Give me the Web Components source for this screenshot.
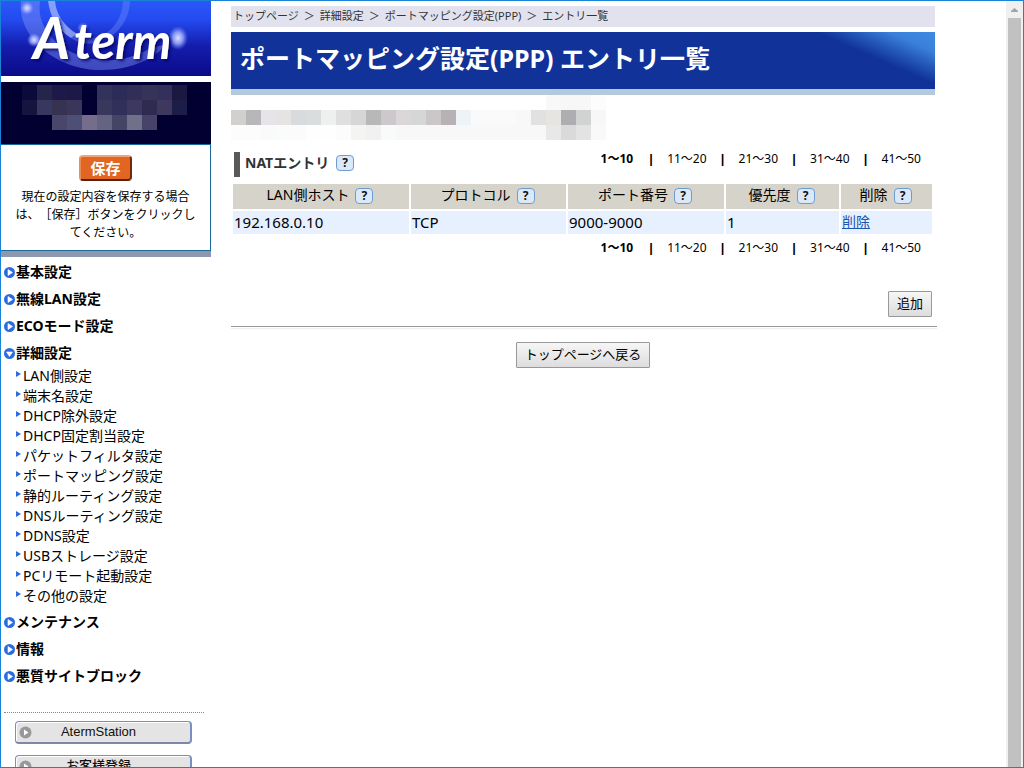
<!DOCTYPE html>
<html lang="ja">
<head>
<meta charset="utf-8">
<title>ポートマッピング設定(PPP) エントリ一覧</title>
<style>
html, body { margin: 0; height: 100%; }
body { font-family: "Noto Sans", "Noto Sans CJK JP", sans-serif; font-size: 14px; color: #000; background: #fff; overflow: hidden; text-spacing-trim: space-all; }
</style>
</head>
<body>
<app-frame>
  <side-bar slot="side">
    <side-group label="基本設定"></side-group>
    <side-group label="無線LAN設定"></side-group>
    <side-group label="ECOモード設定"></side-group>
    <side-group label="詳細設定" open>
      <side-link>LAN側設定</side-link>
      <side-link>端末名設定</side-link>
      <side-link>DHCP除外設定</side-link>
      <side-link>DHCP固定割当設定</side-link>
      <side-link>パケットフィルタ設定</side-link>
      <side-link>ポートマッピング設定</side-link>
      <side-link>静的ルーティング設定</side-link>
      <side-link>DNSルーティング設定</side-link>
      <side-link>DDNS設定</side-link>
      <side-link>USBストレージ設定</side-link>
      <side-link>PCリモート起動設定</side-link>
      <side-link>その他の設定</side-link>
    </side-group>
    <side-group label="メンテナンス"></side-group>
    <side-group label="情報"></side-group>
    <side-group label="悪質サイトブロック"></side-group>
    <banner-link slot="banners">AtermStation</banner-link>
    <banner-link slot="banners">お客様登録</banner-link>
  </side-bar>
  <entry-page slot="main"></entry-page>
</app-frame>

<script>
class Base extends HTMLElement {
  connectedCallback() {
    if (this.shadowRoot) return;
    this.attachShadow({ mode: 'open' }).innerHTML =
      '<style>:host{display:block;box-sizing:border-box}*{box-sizing:border-box}a{color:inherit;text-decoration:none}' + this.css() + '</style>' + this.html();
  }
  css() { return ''; }
  html() { return '<slot></slot>'; }
}

customElements.define('app-frame', class extends Base {
  css() { return `
    :host{display:flex;height:100vh;border:1px solid #1883d7;overflow:hidden;background:#fff}
    .side{flex:none;width:210px}
    .main{flex:1;min-width:0;padding:5px 71px 0 20px}`; }
  html() { return `<div class="side"><slot name="side"></slot></div><main class="main"><slot name="main"></slot></main><scroll-track></scroll-track>`; }
});

customElements.define('scroll-track', class extends Base {
  css() { return `
    :host{flex:none;display:flex;flex-direction:column;align-items:center;width:17px;background:#f0f0f0}
    svg{display:block;width:17px;height:17px;flex:none}
    div{flex:1;width:13px;background:#c1c1c1}`; }
  html() { return `<svg viewBox="0 0 17 17"><path d="M5 11V10L8.500 7L12 10V11Z" fill="#a3a3a3"/></svg><div></div>`; }
});

/* Grid of 15px tiles; each row is a list of colours, "-" leaves the tile empty. */
customElements.define('tile-grid', class extends Base {
  css() { return `svg{display:block}`; }
  html() {
    const rows = this.getAttribute('rows').split('|').map(r => r.trim().split(/\s+/));
    const w = Math.max(...rows.map(r => r.length)) * 15, h = rows.length * 15;
    let s = '';
    rows.forEach((r, y) => r.forEach((c, x) => { if (c !== '-') s += `<rect x="${x * 15}" y="${y * 15}" width="15" height="15" fill="#${c}"/>`; }));
    return `<svg width="${w}" height="${h}" shape-rendering="crispEdges" aria-hidden="true">${s}</svg>`;
  }
});

customElements.define('brand-logo', class extends Base {
  css() { return `svg{display:block;width:100%;height:75px}`; }
  html() { return `
  <svg viewBox="0 0 210 75" role="img" aria-label="Aterm">
    <defs>
      <linearGradient id="sky" x1="0" y1="0" x2="0" y2="1"><stop offset="0" stop-color="#2a58f8"/><stop offset=".25" stop-color="#244af0"/><stop offset=".6" stop-color="#141dac"/><stop offset="1" stop-color="#0b0b88"/></linearGradient>
      <radialGradient id="glow"><stop offset="0" stop-color="#dfe2ff"/><stop offset=".5" stop-color="#a5b2ff" stop-opacity=".8"/><stop offset="1" stop-color="#6f86ff" stop-opacity="0"/></radialGradient>
      <filter id="sh" x="-10%" y="-10%" width="130%" height="140%"><feDropShadow dx="2" dy="2" stdDeviation="1.500" flood-color="#06065c" flood-opacity=".8"/></filter>
    </defs>
    <rect width="210" height="75" fill="url(#sky)"/>
    <path d="M20 0C16 38 58 70 101 69C132 69 155 56 166 43L150 47C136 55 120 60 103 59C66 58 34 32 39 0Z" fill="#7f93f5" opacity=".45"/>
    <path d="M47 0C49 16 57 29 70 37L76 33C63 25 55 13 54 0Z" fill="#a4b8ff" opacity=".75"/>
    <path d="M70 37C93 53 128 33 129 0H122C121 29 94 45 76 33Z" fill="#6f8cff" opacity=".4"/>
    <circle cx="26" cy="7" r="7" fill="url(#glow)"/><circle cx="33" cy="39" r="7" fill="url(#glow)"/><circle cx="82" cy="27" r="6" fill="url(#glow)" opacity=".6"/>
    <ellipse cx="177" cy="37" rx="10" ry="12" fill="url(#glow)"/>
    <g fill="#fff" filter="url(#sh)" font-family="Lato, sans-serif" font-weight="bold" font-style="italic">
      <text x="32" y="58" font-size="57">A</text><text x="73" y="58" font-size="49">term</text>
    </g>
  </svg>`; }
});

customElements.define('save-panel', class extends Base {
  css() { return `
    :host{border:1px solid #1a6b9b;border-left:0;height:107px;padding:10px 10px 0;text-align:center}
    button{display:block;margin:0 auto 7px;width:53px;height:26px;padding:0;border:2px solid;border-color:#f0a47c #6f2c0c #5c2207 #e88d5c;border-radius:4px;background:#e26522;color:#fff;font:bold 15px/20px "Noto Sans CJK JP",sans-serif}
    p{margin:0;font-size:12px;line-height:18px}`; }
  html() { return `<button>保存</button><p>現在の設定内容を保存する場合は、［保存］ボタンをクリックしてください。</p>`; }
});

customElements.define('side-bar', class extends Base {
  css() { return `
    .id{margin-top:6px;height:62px;padding:3px 21px;background:#010030}
    .bar{height:6px;background:#8e97b0}
    nav{padding:2px 0 22px 3px}
    .banners{display:flex;flex-direction:column;gap:11px;margin:0 7px 0 3px;padding:8px 12px 0 11px;border-top:1px dotted #888}`; }
  html() { return `
    <brand-logo></brand-logo>
    <div class="id"><tile-grid rows="0b0a3a 25244a 1d1a49 1c1948 - 33325b 2d2b57 312e58 353458 33305d 1d1842|15143f 363860 37324f 39365a - 39375c 31305b 3c3860 2e2a51 3e385e 1c1d48|- - 48466a 4d4f77 766d8c 646382 444564 70708a 47426a"></tile-grid></div>
    <save-panel></save-panel><div class="bar"></div>
    <nav><slot></slot></nav>
    <div class="banners"><slot name="banners"></slot></div>`; }
});

customElements.define('side-group', class extends Base {
  css() { return `
    a{display:flex;align-items:center;gap:1px;height:27px;padding-bottom:1px;font-weight:bold;line-height:20px}
    svg{flex:none;width:11px;height:11px}
    :host([open]) svg{transform:rotate(90deg)}
    :host([open]){padding-bottom:2px}
    .sub{padding-left:12px}`; }
  html() { return `<a href="#"><svg viewBox="0 0 11 11" aria-hidden="true"><circle cx="5.500" cy="5.500" r="5.500" fill="#2a6be0"/><path d="M4 2.500L8.500 5.500L4 8.500Z" fill="#fff" stroke="#fff" stroke-width=".6"/></svg><span>${this.getAttribute('label')}</span></a><div class="sub"><slot></slot></div>`; }
});

customElements.define('side-link', class extends Base {
  css() { return `
    a{display:flex;align-items:center;gap:2px;height:20px;line-height:18px;padding-bottom:2px;white-space:nowrap}
    svg{flex:none;width:5px;height:6px;margin-bottom:4px}`; }
  html() { return `<a href="#"><svg viewBox="0 0 5 6" aria-hidden="true"><path d="M0 0L5 3L0 6Z" fill="#2a6be0"/></svg><span><slot></slot></span></a>`; }
});

customElements.define('banner-link', class extends Base {
  css() { return `
    a{display:flex;align-items:center;height:23px;padding:0 25px 0 3px;border:1px solid #7890c0;border-right-width:2px;border-bottom:2px solid #7c88a4;border-radius:4px;background:#e4e4e4;box-shadow:inset 1px 1px #fff;color:#111;font:500 13px/20px "Liberation Sans","Noto Sans CJK JP",sans-serif}
    svg{flex:none;width:13px;height:13px}
    span{flex:1;text-align:center}`; }
  html() { return `<a href="#"><svg viewBox="0 0 13 13" aria-hidden="true"><circle cx="6.500" cy="6.500" r="6" fill="#999"/><path d="M5 3.500L9.500 6.500L5 9.500Z" fill="#fff"/></svg><span><slot></slot></span></a>`; }
});

customElements.define('help-badge', class extends Base {
  css() { return `
    :host{display:inline-block;vertical-align:middle}
    button{display:block;width:18px;height:16px;padding:0;border:1px solid #6f9cd0;border-radius:4px;background:#dbe8f7;color:#111;font:bold 12px/14px "Noto Sans",sans-serif}`; }
  html() { return `<button aria-label="ヘルプ">?</button>`; }
});

customElements.define('page-links', class extends Base {
  css() { return `
    :host{display:flex;justify-content:flex-end;align-items:center;font-size:12px;line-height:18px;height:18px;padding-right:14px}
    i{width:32px;text-align:center;font:900 12px/12px "Noto Sans",sans-serif}
    b{margin-right:2px}`; }
  html() { return `<b>1～10</b><i>|</i>` + ['11～20', '21～30', '31～40', '41～50'].map(t => `<a href="#">${t}</a>`).join('<i>|</i>'); }
});

customElements.define('push-button', class extends Base {
  css() { return `
    button{display:block;height:26px;padding:0 8px 2px;border:1px solid #999;border-radius:1px;background:linear-gradient(#f6f6f6,#ddd);color:#000;font:13px/22px "Noto Sans","Noto Sans CJK JP",sans-serif}`; }
  html() { return `<button><slot></slot></button>`; }
});

customElements.define('entry-table', class extends Base {
  css() { return `
    table{width:100%;table-layout:fixed;border-collapse:separate;border-spacing:2px}
    th{height:25px;padding:0 2px 3px 0;background:#d6d3ca;font-weight:normal;line-height:20px}
    td{height:22px;padding:0 1px 2px;background:#e6f0ff;font-size:15px;line-height:20px}
    td a{font-size:14px;color:#1a55b0;text-decoration:underline}
    help-badge{margin-left:6px}
    .host{width:176px}.proto{width:155px}.port{width:156px}.pri{width:113px}.del{width:91px}`; }
  html() {
    const h = [['host', 'LAN側ホスト'], ['proto', 'プロトコル'], ['port', 'ポート番号'], ['pri', '優先度'], ['del', '削除']];
    return `<table><thead><tr>${h.map(([c, t]) => `<th class="${c}">${t}<help-badge></help-badge></th>`).join('')}</tr></thead>
    <tbody><tr><td>192.168.0.10</td><td>TCP</td><td>9000-9000</td><td>1</td><td><a href="#">削除</a></td></tr></tbody></table>`;
  }
});

customElements.define('title-band', class extends Base {
  css() { return `
    :host{height:63px;margin-top:5px;border-bottom:6px solid #b4cadc;background:linear-gradient(to bottom left,#3f8ae2 0,#3a80da 20%,#2459b8 36%,#113399 52%) right top/114px 50px no-repeat #113399}
    h1{margin:0;padding-left:9px;font-size:25px;line-height:52px;color:#fff;white-space:nowrap}`; }
  html() { return `<h1><slot></slot></h1>`; }
});

customElements.define('entry-page', class extends Base {
  css() { return `
    .crumbs{display:flex;gap:5px;height:21px;padding-left:2px;background:#e2e2ee;color:#333;font-size:11px;line-height:20px;white-space:nowrap}
    .head{display:flex;justify-content:space-between;align-items:flex-start;height:42px;padding-top:10px}
    h2{display:flex;align-items:center;gap:7px;margin:2px 0 0 3px;height:25px;padding:0 0 3px 5px;border-left:6px solid #595959;font-size:14px;line-height:20px;color:#333}
    .table{padding-right:1px}
    .foot{margin-top:3px}
    .add{display:flex;justify-content:flex-end;margin-top:34px;padding-right:3px}
    hr{margin:9px -2px 0 0;border:0;height:3px;border-top:1px solid #999;border-bottom:1px solid #eee}
    .back{display:flex;justify-content:center;margin-top:13px}`; }
  html() { return `
    <div class="crumbs"><a href="#">トップページ</a><span>＞</span><a href="#">詳細設定</a><span>＞</span><a href="#">ポートマッピング設定(PPP)</a><span>＞</span><span>エントリ一覧</span></div>
    <title-band>ポートマッピング設定(PPP) エントリ一覧</title-band>
    <tile-grid rows="- - - - - - - - - - - - - - - - - - - - - f8f8f8 f7f7f7 f7f7f7 fcfcfc|d1d0ce b7b6b8 e6e4e8 e6e4e3 d8dadc d9dddd eef0f0 dfdfe0 d6d6d7 b8b8b9 cdc8cc dad7d9 d4d7d6 cbc6c7 b8b1b3 eef3f8 fafafa fafafa fafafa f8f8f8 e1e1e2 e6e5e1 aeadb0 d1d3d2 f7f7f7|fcfcfc fcfcfc fafafa fafcfc fbfbfb fefefe fefefe fcfcfc f4f4f3 f1f1f1 f8fbfa f8f8f8 f8f8f8 f8f8f8 f8f8f8 f8f8f8 f8f8f8 f8f8f8 f8f8f8 f8f8f8 f8f8f8 e8e8e8 dadada e3e3e4 f9f9f9"></tile-grid>
    <div class="head"><h2>NATエントリ<help-badge></help-badge></h2><page-links></page-links></div>
    <div class="table"><entry-table></entry-table></div>
    <page-links class="foot"></page-links>
    <div class="add"><push-button>追加</push-button></div>
    <hr>
    <div class="back"><push-button>トップページへ戻る</push-button></div>`; }
});
</script>
</body>
</html>
